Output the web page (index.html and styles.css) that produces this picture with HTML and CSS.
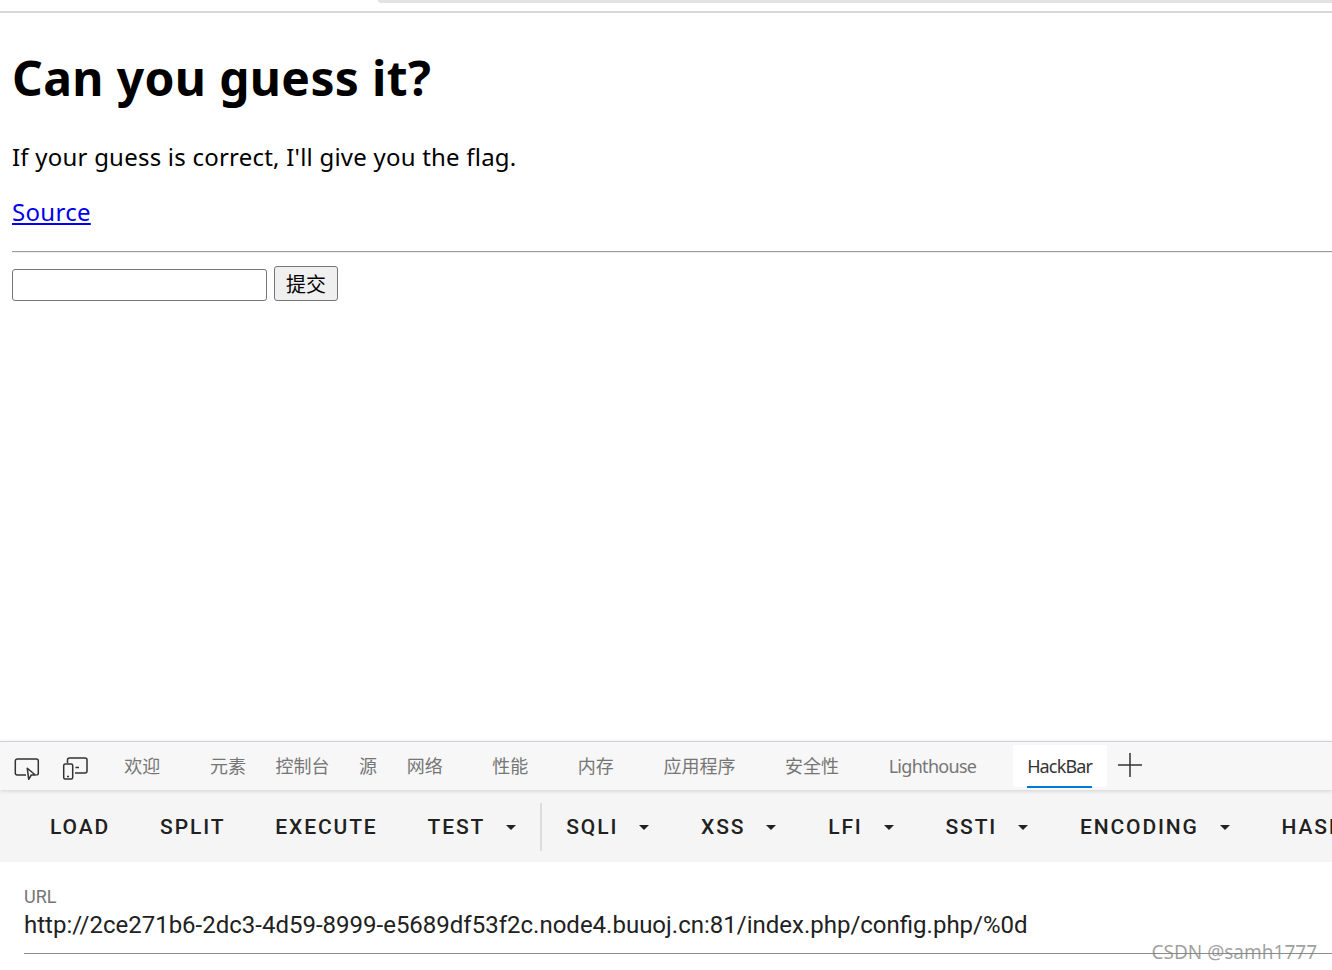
FILE: index.html
```html
<!DOCTYPE html>
<html lang="en">
<head>
    <meta charset="UTF-8">
    <title>Can you guess it?</title>
    <link rel="stylesheet" href="styles.css">
</head>
<body>
    <div class="window">
        <div class="top-strip"><div class="top-tab"></div></div>
        <div class="page">
            <h1>Can you guess it?</h1>
            <p class="intro">If your guess is correct, I'll give you the flag.</p>
            <p class="source"><a href="#">Source</a></p>
            <hr class="rule">
            <form class="guess-form">
                <input class="guess-input" type="text">
                <button class="guess-btn" type="button">提交</button>
            </form>
        </div>
        <div class="devtools">
            <div class="tab-bar">
                <svg class="tool-icon first" width="30" height="28" viewBox="0 0 30 28">
                    <path d="M14 23H5.300a2 2 0 0 1-2-2V9a2 2 0 0 1 2-2h19a2 2 0 0 1 2 2v12a2 2 0 0 1-2 2" fill="none" stroke="#333" stroke-width="1.500"/>
                    <path d="M15.300 16.300l8 6.700h-4l-2.600 4.300z" fill="#f7f7f7" stroke="#333" stroke-width="1.500" stroke-linejoin="round"/>
                </svg>
                <svg class="tool-icon" width="30" height="28" viewBox="0 0 30 28">
                    <path d="M7.500 11V8a2 2 0 0 1 2-2h15.500a2 2 0 0 1 2 2v11a2 2 0 0 1-2 2H15" fill="none" stroke="#333" stroke-width="1.500"/>
                    <rect x="3.700" y="12" width="9" height="15" rx="1.500" fill="none" stroke="#333" stroke-width="1.500"/>
                    <path d="M7 24.500h2M15.500 15.500h3.500" stroke="#333" stroke-width="1.500"/>
                </svg>
                <span class="tab wide">欢迎</span>
                <span class="tab">元素</span>
                <span class="tab">控制台</span>
                <span class="tab">源</span>
                <span class="tab wide">网络</span>
                <span class="tab wide">性能</span>
                <span class="tab wide">内存</span>
                <span class="tab wide">应用程序</span>
                <span class="tab wide">安全性</span>
                <span class="tab latin">Lighthouse</span>
                <span class="tab latin active"><span class="tab-label">HackBar</span></span>
                <svg class="add-icon" width="24" height="24" viewBox="0 0 24 24">
                    <path d="M12 0v24M0 12h24" stroke="#333" stroke-width="1.500"/>
                </svg>
            </div>
            <div class="toolbar">
                <span class="tb-btn">LOAD</span>
                <span class="tb-btn">SPLIT</span>
                <span class="tb-btn">EXECUTE</span>
                <span class="tb-btn has-caret before-divider">TEST<i class="caret"></i></span>
                <span class="divider"></span>
                <span class="tb-btn has-caret">SQLI<i class="caret"></i></span>
                <span class="tb-btn has-caret">XSS<i class="caret"></i></span>
                <span class="tb-btn has-caret">LFI<i class="caret"></i></span>
                <span class="tb-btn has-caret">SSTI<i class="caret"></i></span>
                <span class="tb-btn has-caret">ENCODING<i class="caret"></i></span>
                <span class="tb-btn">HASH</span>
            </div>
            <div class="url-field">
                <div class="url-label">URL</div>
                <div class="url-value">http://2ce271b6-2dc3-4d59-8999-e5689df53f2c.node4.buuoj.cn:81/index.php/config.php/%0d</div>
            </div>
        </div>
        <div class="watermark">CSDN @samh1777</div>
    </div>
</body>
</html>
```

FILE: styles.css
```css
html,body {
    margin: 0;
    padding: 0;
    height: 100%;
    overflow: hidden;
    background: #fff;
}
.window {
    position: relative;
    display: flex;
    flex-direction: column;
    width: 1332px;
    height: 970px;
    overflow: hidden;
    font-family: "Noto Sans", "Noto Sans CJK SC", sans-serif;
}
.top-strip {
    height: 11px;
    flex: none;
    border-bottom: 2px solid #d6d6d6;
}
.top-tab {
    height: 3px;
    margin-left: 378px;
    background: #e3e3e3;
    border-bottom-left-radius: 6px;
}
.page {
    flex: 1;
    padding: 0 0 0 12px;
}
h1 {
    margin: 32px 0 0;
    font-size: 48px;
    line-height: 66px;
    font-weight: 700;
    letter-spacing: .35px;
    color: #000;
}
.intro {
    margin: 29px 0 0;
    font-size: 24px;
    line-height: 33px;
    letter-spacing: .22px;
    color: #000;
}
.source {
    margin: 22px 0 0;
    font-size: 24px;
    line-height: 33px;
    letter-spacing: .3px;
}
.source a {
    color: #0000ee;
}
.rule {
    margin: 23px 0 0;
    border: 0;
    border-top: 1px solid #9a9a9a;
    border-bottom: 1px solid #eee;
}
.guess-form {
    display: flex;
    align-items: flex-end;
    gap: 7px;
    margin-top: 13px;
}
.guess-input {
    box-sizing: border-box;
    width: 255px;
    height: 32px;
    margin: 0;
    border: 1px solid #767676;
    border-radius: 3px;
    background: #fff;
}
.guess-btn {
    box-sizing: border-box;
    width: 64px;
    height: 35px;
    margin: 0;
    padding: 0;
    border: 1px solid #767676;
    border-radius: 3px;
    background: #efefef;
    color: #000;
    font-family: "Noto Sans CJK SC", sans-serif;
    font-size: 20px;
    font-weight: 400;
}

/* devtools */
.devtools {
    flex: none;
    height: 229px;
    display: flex;
    flex-direction: column;
}
.tab-bar {
    position: relative;
    display: flex;
    align-items: center;
    flex: none;
    height: 48px;
    border-top: 1px solid #d0d0dc;
    background: #f7f7f7;
    box-shadow: 0 1px 4px rgba(0,0,0,.15);
    padding-left: 12px;
}
.tool-icon {
    flex: none;
    margin-right: 18px;
}
.tool-icon + .tab {
    margin-left: 1.500px;
}
.tab {
    padding: 0 14.800px;
    font-size: 18px;
    line-height: 42px;
    color: #767676;
    white-space: nowrap;
}
.tab.wide {
    margin-right: 20px;
}
.tab.latin {
    letter-spacing: -.7px;
}
.tab.active {
    height: 42px;
    margin-left: 22px;
    padding: 0 15px 0 14px;
    background: #fff;
    border-radius: 3px;
    color: #333;
    letter-spacing: -.85px;
}
.tab-label {
    display: block;
    height: 41px;
    border-bottom: 2px solid #0078d4;
}
.add-icon {
    margin: 0 0 2px 11px;
}
.toolbar {
    flex: none;
    display: flex;
    align-items: center;
    height: 70px;
    padding: 2px 0 0 50px;
    background: #f5f5f5;
    white-space: nowrap;
}
.tb-btn {
    display: inline-flex;
    align-items: center;
    flex: none;
    margin-right: 50px;
    font-family: Roboto, sans-serif;
    font-size: 21px;
    font-weight: 500;
    letter-spacing: 1.875px;
    color: #212121;
}
.tb-btn.has-caret {
    margin-right: 51.800px;
}
.tb-btn.before-divider {
    margin-right: 24px;
}
.caret {
    width: 0;
    height: 0;
    margin-left: 21px;
    border-left: 5.500px solid transparent;
    border-right: 5.500px solid transparent;
    border-top: 5.500px solid #212121;
}
.divider {
    flex: none;
    width: 2px;
    height: 48px;
    margin-right: 24px;
    background: #dcdcdc;
}
.url-field {
    flex: 1;
    padding: 24px 0 0 24px;
    font-family: Roboto, sans-serif;
}
.url-label {
    font-size: 18px;
    line-height: 22px;
    color: #757575;
}
.url-value {
    height: 45px;
    border-bottom: 1px solid #8c8c8c;
    font-size: 24px;
    line-height: 34px;
    color: #212121;
    white-space: nowrap;
}
.watermark {
    position: absolute;
    right: 15px;
    bottom: 5px;
    font-size: 19px;
    line-height: 26px;
    color: rgba(130,130,130,.75);
}
```
